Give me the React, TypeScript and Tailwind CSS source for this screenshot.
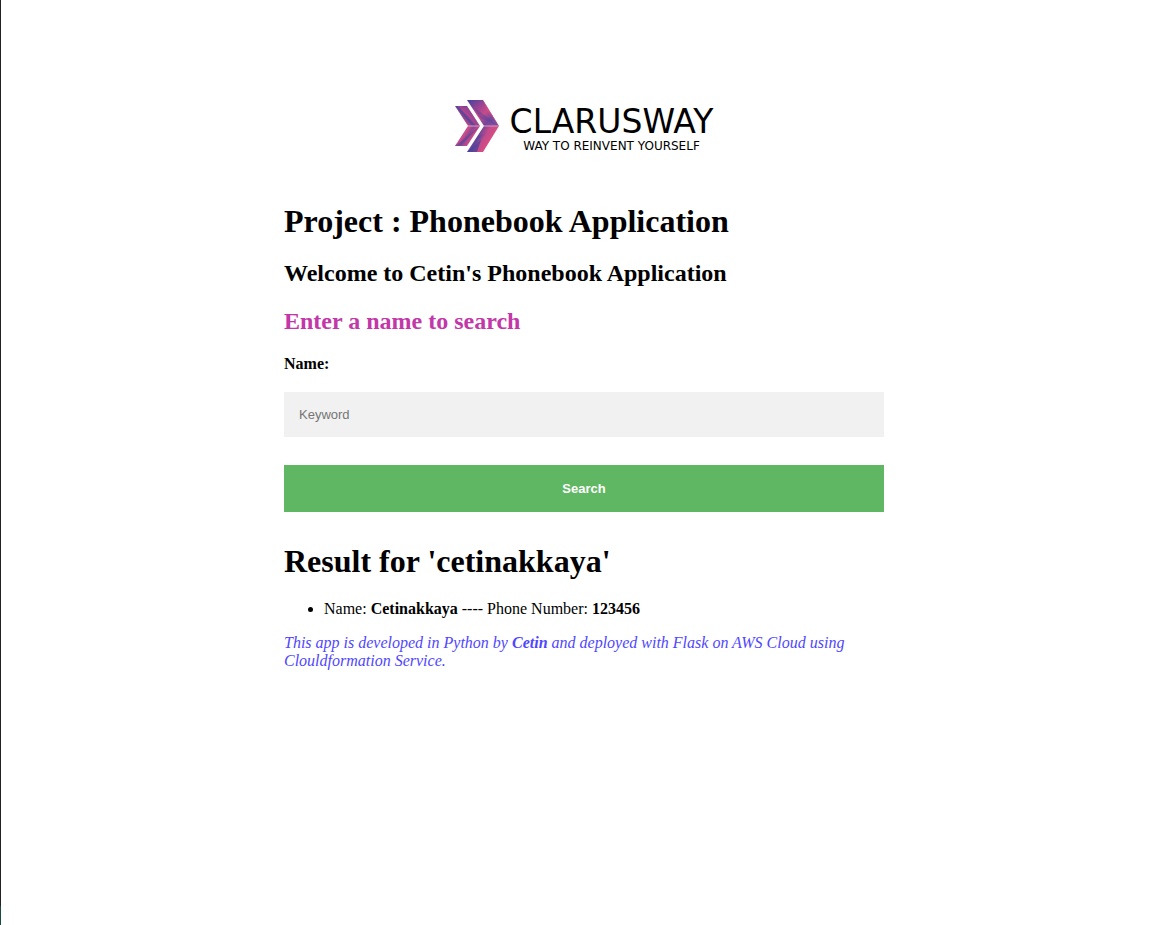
import React from "react";

function LogoMark() {
  return (
    <svg viewBox="0 0 44 52" className="h-[52px] w-11 shrink-0" aria-hidden="true">
      <defs>
        <linearGradient id="smallTop" gradientUnits="userSpaceOnUse" x1="15" y1="9" x2="5" y2="18">
          <stop offset="0" stopColor="#6a3f98" />
          <stop offset="0.45" stopColor="#a3458f" />
          <stop offset="0.6" stopColor="#55439b" />
          <stop offset="1" stopColor="#e0507f" />
        </linearGradient>
        <linearGradient id="smallBottom" gradientUnits="userSpaceOnUse" x1="4" y1="33" x2="16" y2="41">
          <stop offset="0" stopColor="#7a4498" />
          <stop offset="0.35" stopColor="#d04c88" />
          <stop offset="0.6" stopColor="#8a4796" />
          <stop offset="1" stopColor="#d84b82" />
        </linearGradient>
        <linearGradient id="bigTop" gradientUnits="userSpaceOnUse" x1="16" y1="0" x2="38" y2="26">
          <stop offset="0" stopColor="#51429b" />
          <stop offset="0.3" stopColor="#9a4493" />
          <stop offset="0.55" stopColor="#c84b8a" />
          <stop offset="0.8" stopColor="#74479b" />
          <stop offset="1" stopColor="#8a4d9f" />
        </linearGradient>
        <linearGradient id="bigBottom" gradientUnits="userSpaceOnUse" x1="18" y1="34" x2="34" y2="44">
          <stop offset="0" stopColor="#94489a" />
          <stop offset="0.35" stopColor="#5b449c" />
          <stop offset="0.6" stopColor="#c04b8c" />
          <stop offset="1" stopColor="#dc4c82" />
        </linearGradient>
      </defs>
      <path d="M0 6H12L25 26H13Z" fill="url(#smallTop)" />
      <path d="M12 6L25 26L6 10Z" fill="#c5498c" opacity="0.35" />
      <path d="M13 26H25L12 46H0Z" fill="url(#smallBottom)" />
      <path d="M25 26L0 46H5Z" fill="#54429a" opacity="0.6" />
      <path d="M12 0H28L44 26H29Z" fill="url(#bigTop)" />
      <path d="M28 0L44 26L32 10Z" fill="#e04e80" opacity="0.6" />
      <path d="M44 26L20 8L25 18Z" fill="#51429b" opacity="0.45" />
      <path d="M29 26H44L28 52H12Z" fill="url(#bigBottom)" />
      <path d="M29 26H44L24 36Z" fill="#d44c86" opacity="0.4" />
      <path d="M12 52L26 40L22 52Z" fill="#47419b" opacity="0.7" />
      <path d="M13 26H25M29 26H44" stroke="#d79bc6" strokeWidth="1" />
    </svg>
  );
}

function Logo() {
  return (
    <div className="flex items-center justify-center gap-[11px] font-['DejaVu_Sans',sans-serif]">
      <LogoMark />
      <div className="flex flex-col items-center pt-1">
        <span className="text-[33px] leading-9">CLARUSWAY</span>
        <span className="text-[12px] leading-3">WAY TO REINVENT YOURSELF</span>
      </div>
    </div>
  );
}

export default function App() {
  return (
    <div className="flex min-h-screen bg-white font-['Liberation_Serif',serif] text-base leading-[18px] text-black">
      <div className="flex w-px shrink-0 flex-col bg-[#222222]">
        <div className="mt-auto h-[19px] bg-[#1f4a3e]" />
      </div>
      <main className="flex grow justify-center pt-[100px] pl-[10px]">
        <div className="w-full max-w-[600px]">
          <Logo />
          <h1 className="mt-[51px] text-[32px] leading-9 font-bold">Project : Phonebook Application</h1>
          <h2 className="mt-5 text-2xl leading-7 font-bold">Welcome to Cetin's Phonebook Application</h2>
          <form onSubmit={(event) => event.preventDefault()}>
            <h2 className="mt-5 text-2xl leading-7 font-bold text-[#c238a8]">Enter a name to search</h2>
            <label htmlFor="keyword" className="mt-5 block font-bold">
              Name:
            </label>
            <input
              id="keyword"
              name="username"
              type="text"
              placeholder="Keyword"
              className="mt-[19px] block h-[45px] w-full bg-[#f1f1f1] px-[15px] font-['Liberation_Sans',sans-serif] text-[13px] placeholder:text-[#757575] placeholder:opacity-100"
            />
            <button
              type="submit"
              className="mt-7 block h-[47px] w-full bg-[#5fb764] font-['Liberation_Sans',sans-serif] text-[13px] font-bold text-white"
            >
              Search
            </button>
          </form>
          <h1 className="mt-[31px] text-[32px] leading-9 font-bold">Result for 'cetinakkaya'</h1>
          <ul className="mt-[21px] list-disc pl-10">
            <li>
              Name: <b>Cetinakkaya</b> ---- Phone Number: <b>123456</b>
            </li>
          </ul>
          <p className="mt-4 text-[#4f46ff] italic">
            This app is developed in Python by <b>Cetin</b> and deployed with Flask on AWS Cloud using Clouldformation
            Service.
          </p>
        </div>
      </main>
    </div>
  );
}
